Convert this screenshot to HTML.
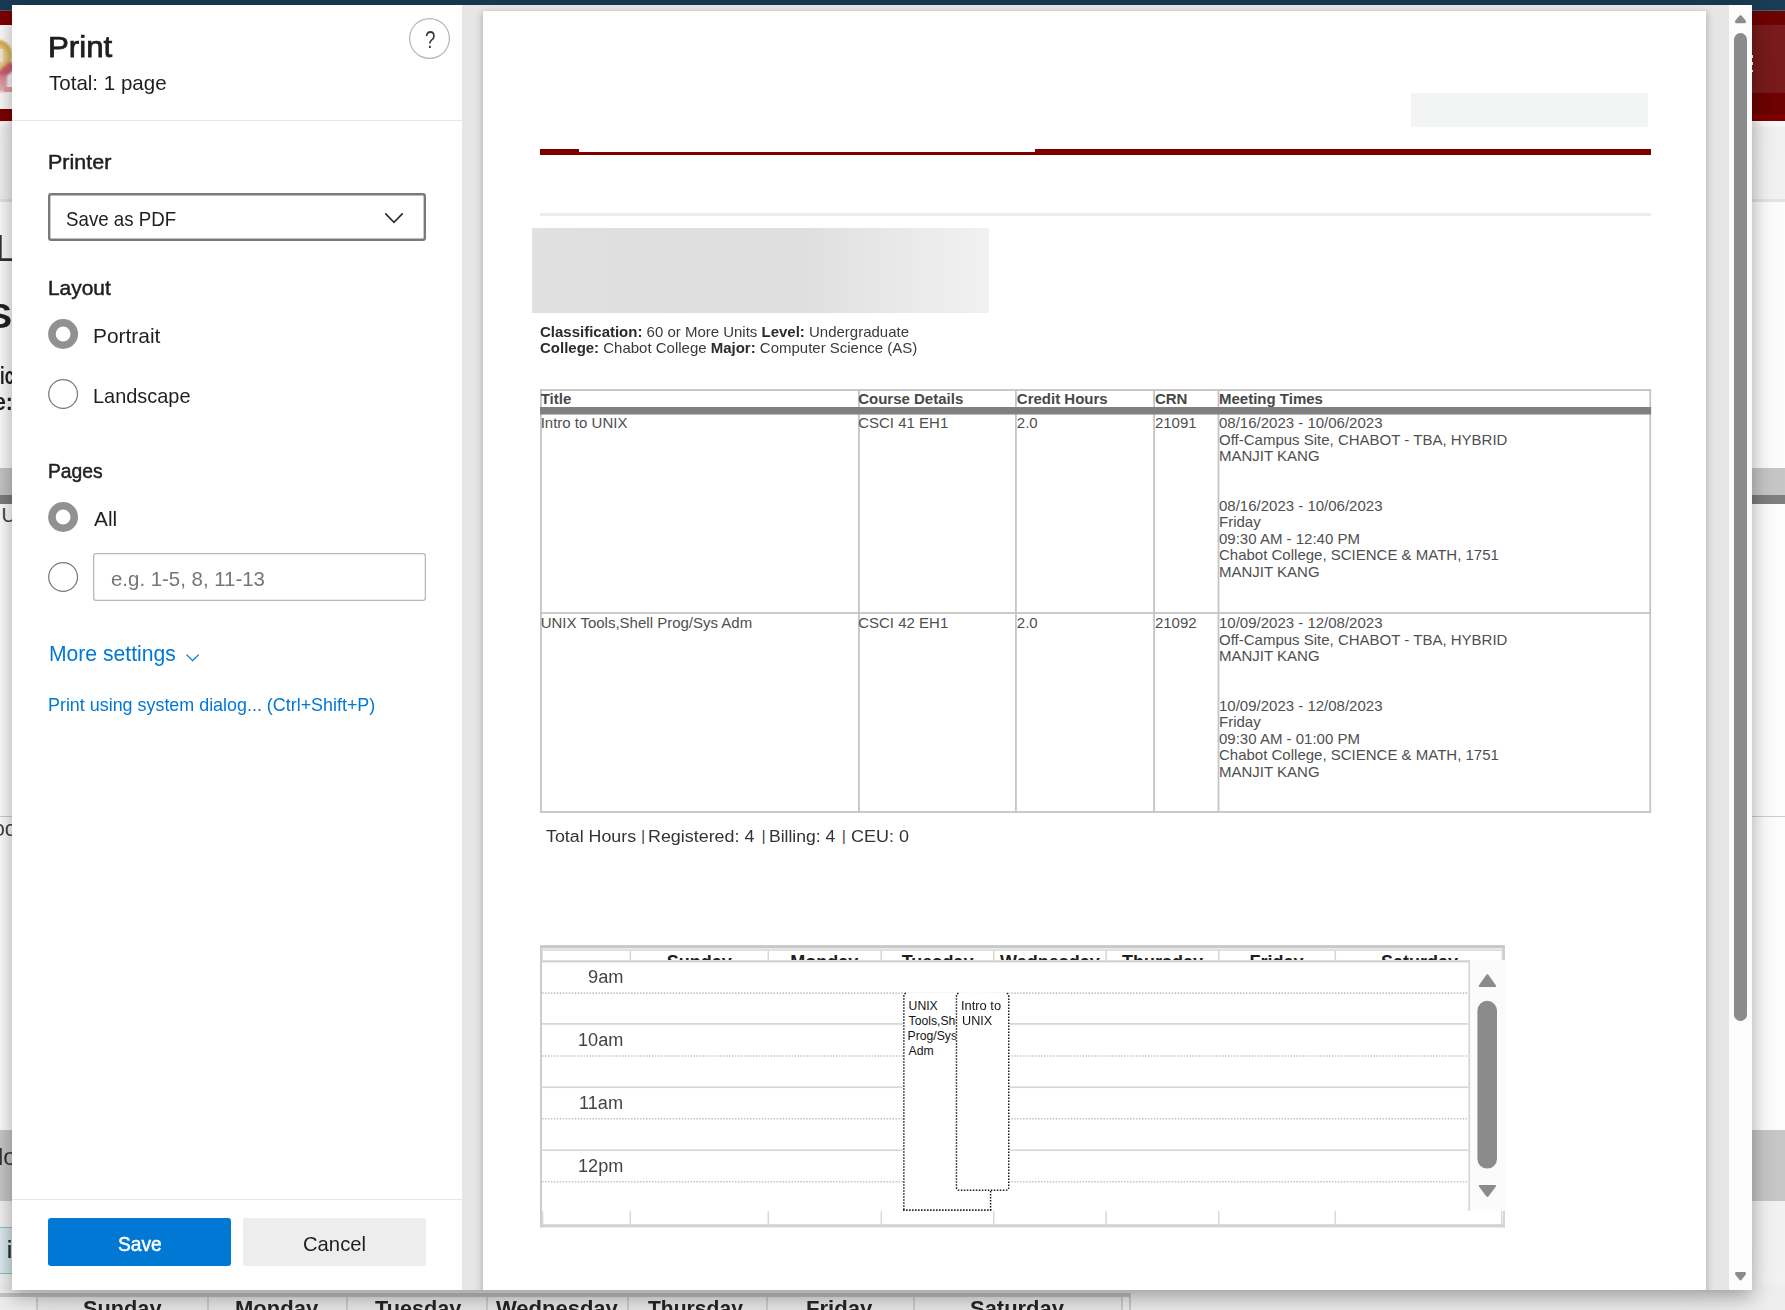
<!DOCTYPE html>
<html lang="en"><head><meta charset="utf-8"><title>Print</title>
<style>
html,body{margin:0;padding:0}
body{width:1785px;height:1310px;position:relative;overflow:hidden;background:#fff;font-family:"Liberation Sans",sans-serif}
.a{position:absolute}
.t{position:absolute;white-space:nowrap;transform-origin:0 0;display:block;margin:0;padding:0;font-weight:normal;font-style:normal;text-decoration:none;border:0;background:none;font-family:inherit}
svg{position:absolute;left:0;top:0;overflow:visible}
</style></head><body>

<div class="a" id="bg" style="left:0;top:0;width:1785px;height:1310px;overflow:hidden;background:#fff">
<div class="a" style="left:0;top:0;width:1785px;height:10px;background:#1a3c54"></div>
<div class="a" style="left:0;top:9.8px;width:1785px;height:1.5px;background:#3a647f"></div>
<div class="a" style="left:0;top:11.2px;width:1785px;height:109.6px;background:#7f0000"></div>
<div class="a" style="left:1752px;top:11.2px;width:33px;height:102.6px;background:#6e0303"></div>
<div class="a" style="left:1752px;top:24.8px;width:33px;height:68px;background:#7a1b1d"></div>
<div class="a" style="left:1751px;top:55px;width:2px;height:2.5px;background:#fff"></div>
<div class="a" style="left:1751px;top:62px;width:2px;height:2.5px;background:#fff"></div>
<div class="a" style="left:1751px;top:69.5px;width:2px;height:2.5px;background:#fff"></div>
<div class="a" style="left:0;top:24.8px;width:14px;height:84.2px;background:#fcfcfc;overflow:hidden"><div class="a" style="left:-16px;top:15px;width:28px;height:30px;border-radius:50%;background:radial-gradient(circle at 45% 55%,#f8efd9 0,#ecd39a 35%,#d9a838 70%,#d4a02c 100%);filter:blur(.8px)"></div><div class="a" style="left:-2px;top:24px;width:5px;height:13px;background:#f6ead0;filter:blur(.7px)"></div><div class="a" style="left:-6px;top:42px;width:22px;height:9px;background:#cf6070;transform:rotate(-38deg);filter:blur(.8px)"></div><div class="a" style="left:-4px;top:50px;width:11px;height:17px;background:linear-gradient(180deg,#d9808b,#ecbac0);filter:blur(.8px)"></div><div class="a" style="left:4px;top:62px;width:9px;height:5px;background:#e4a0a8;filter:blur(.6px)"></div></div>
<div class="a" style="left:0;top:120.8px;width:1785px;height:79px;background:linear-gradient(180deg,#fdfdfd 0,#f8f8f8 7%,#f3f3f3 8.5%,#f4f4f4 100%)"></div>
<div class="a" style="left:0;top:199px;width:1785px;height:3px;background:#e6e6e6"></div>
<div class="a" style="left:0;top:202px;width:1785px;height:266px;background:#fefefe"></div>
<div class="a" style="left:0;top:468px;width:1785px;height:27px;background:#c8c8c8"></div>
<div class="a" style="left:0;top:495px;width:1785px;height:9px;background:#808080"></div>
<div class="a" style="left:0;top:815.5px;width:1785px;height:1.5px;background:#cfcfcf"></div>
<div class="a" style="left:0;top:1129.5px;width:1785px;height:71px;background:#c9c9c9"></div>
<div class="a" style="left:0;top:1200.5px;width:1785px;height:110px;background:#f4f4f4"></div>
<div class="a" style="left:0;top:1226.5px;width:14px;height:45px;background:linear-gradient(90deg,#e0eff2,#d0e6eb);border-top:1.5px solid #93bcc7;border-bottom:1.5px solid #93bcc7"></div>
<span class="t" style="left:-5.09px;top:226px;font-size:37.0px;line-height:45px;color:#333;transform:scaleX(1.0294);">L</span>
<span class="t" style="left:-12.56px;top:294px;font-size:35.5px;line-height:44px;font-weight:bold;color:#222;transform:scaleX(1.0591);">S</span>
<span class="t" style="left:-0.41px;top:361px;font-size:23.5px;line-height:30px;font-weight:bold;color:#222;transform:scaleX(0.7124);">ic</span>
<span class="t" style="left:-6.00px;top:387px;font-size:23.5px;line-height:30px;font-weight:bold;color:#222;transform:scaleX(0.9072);">e:</span>
<span class="t" style="left:1.50px;top:502px;font-size:20.0px;line-height:26px;color:#444;">U</span>
<span class="t" style="left:-7.50px;top:814px;font-size:22.0px;line-height:29px;color:#444;transform:scaleX(0.9697);">oo</span>
<span class="t" style="left:-1.70px;top:1141px;font-size:24.0px;line-height:31px;color:#333;transform:scaleX(0.9982);">lo</span>
<span class="t" style="left:6.80px;top:1235px;font-size:23.0px;line-height:30px;font-weight:bold;color:#333;transform:scaleX(0.8000);">i</span>
<div class="a" style="left:0;top:1285px;width:1785px;height:25px;background:#f0f0f0"></div>
<div class="a" style="left:0;top:1293.1px;width:1131px;height:3.7px;background:#c6c6c6"></div>
<div class="a" style="left:1129px;top:1293.1px;width:2px;height:17px;background:#cbcbcb"></div>
<div class="a" style="left:36px;top:1296.8px;width:1086px;height:14px;background:#ebebeb"></div>
<div class="a" style="left:35.5px;top:1296.8px;width:2px;height:14px;background:#cfcfcf"></div>
<div class="a" style="left:207.4px;top:1296.8px;width:2px;height:14px;background:#cfcfcf"></div>
<div class="a" style="left:346.3px;top:1296.8px;width:2px;height:14px;background:#cfcfcf"></div>
<div class="a" style="left:486.4px;top:1296.8px;width:2px;height:14px;background:#cfcfcf"></div>
<div class="a" style="left:626.5px;top:1296.8px;width:2px;height:14px;background:#cfcfcf"></div>
<div class="a" style="left:766.2px;top:1296.8px;width:2px;height:14px;background:#cfcfcf"></div>
<div class="a" style="left:912.8px;top:1296.8px;width:2px;height:14px;background:#cfcfcf"></div>
<div class="a" style="left:1121.1px;top:1296.8px;width:2px;height:14px;background:#cfcfcf"></div>
<span class="t" style="left:82.50px;top:1294px;font-size:22.0px;line-height:29px;font-weight:bold;color:#262626;transform:scaleX(0.9885);">Sunday</span>
<span class="t" style="left:235.40px;top:1294px;font-size:22.0px;line-height:29px;font-weight:bold;color:#262626;transform:scaleX(1.0003);">Monday</span>
<span class="t" style="left:374.50px;top:1294px;font-size:22.0px;line-height:29px;font-weight:bold;color:#262626;transform:scaleX(0.9854);">Tuesday</span>
<span class="t" style="left:496.00px;top:1294px;font-size:22.0px;line-height:29px;font-weight:bold;color:#262626;transform:scaleX(0.9998);">Wednesday</span>
<span class="t" style="left:648.40px;top:1294px;font-size:22.0px;line-height:29px;font-weight:bold;color:#262626;transform:scaleX(0.9580);">Thursday</span>
<span class="t" style="left:805.90px;top:1294px;font-size:22.0px;line-height:29px;font-weight:bold;color:#262626;transform:scaleX(1.0048);">Friday</span>
<span class="t" style="left:970.00px;top:1294px;font-size:22.0px;line-height:29px;font-weight:bold;color:#262626;transform:scaleX(0.9978);">Saturday</span>
</div>
<div class="a" id="dlg" style="left:12px;top:5px;width:1740px;height:1285px;background:#fff;box-shadow:0 32px 72px rgba(0,0,0,.06),0 6px 18px rgba(0,0,0,.32)"></div>
<div class="a" style="left:12px;top:120px;width:450px;height:1.3px;background:#e6e6e6"></div>
<div class="a" style="left:12px;top:1199px;width:450px;height:1.3px;background:#e6e6e6"></div>
<div class="a" style="left:409px;top:18px;width:41px;height:41px;box-sizing:border-box;border-radius:50%;box-shadow:inset 0 0 0 1.2px #b4b4b4"></div>
<span class="t" style="left:424.90px;top:25px;font-size:23.5px;line-height:30px;color:#3a3a3a;transform:scaleX(0.8000);">?</span>
<h1 class="t" style="left:47.83px;top:29px;font-size:28.8px;line-height:36px;-webkit-text-stroke:0.75px #1f1f1f;color:#1f1f1f;transform:scaleX(1.0855);">Print</h1>
<span class="t" style="left:48.50px;top:69px;font-size:21.0px;line-height:27px;color:#1f1f1f;transform:scaleX(0.9776);">Total: 1 page</span>
<h2 class="t" style="left:48.38px;top:148px;font-size:21.0px;line-height:27px;-webkit-text-stroke:0.5px #1f1f1f;color:#1f1f1f;transform:scaleX(1.0237);">Printer</h2>
<div class="a" style="left:48px;top:193px;width:378px;height:48px;border-radius:3px;box-shadow:inset 0 0 0 2.4px #7a7a7a"></div>
<span class="t" style="left:66.00px;top:205px;font-size:21.0px;line-height:27px;color:#1f1f1f;transform:scaleX(0.8911);">Save as PDF</span>
<svg width="1785" height="1310"><path d="M385.3 213.4 L394 222.3 L402.7 213.4" fill="none" stroke="#2a2a2a" stroke-width="1.6"/><path d="M186.5 654.6 L192.6 660.7 L198.7 654.6" fill="none" stroke="#0078d4" stroke-width="1.3"/></svg>
<h2 class="t" style="left:48.41px;top:274px;font-size:21.0px;line-height:27px;-webkit-text-stroke:0.5px #1f1f1f;color:#1f1f1f;transform:scaleX(0.9949);">Layout</h2>
<svg width="1785" height="1310"><circle cx="63.1" cy="334" r="11.2" fill="#fff" stroke="#919191" stroke-width="7.6"/></svg>
<label class="t" style="left:93.10px;top:322px;font-size:21.0px;line-height:27px;color:#1f1f1f;transform:scaleX(0.9962);">Portrait</label>
<svg width="1785" height="1310"><circle cx="63.1" cy="394" r="14.4" fill="#fff" stroke="#7a7a7a" stroke-width="1.25"/></svg>
<label class="t" style="left:93.15px;top:382px;font-size:21.0px;line-height:27px;color:#1f1f1f;transform:scaleX(0.9488);">Landscape</label>
<h2 class="t" style="left:48.48px;top:457px;font-size:21.0px;line-height:27px;-webkit-text-stroke:0.5px #1f1f1f;color:#1f1f1f;transform:scaleX(0.9183);">Pages</h2>
<svg width="1785" height="1310"><circle cx="63.1" cy="517" r="11.2" fill="#fff" stroke="#919191" stroke-width="7.6"/></svg>
<label class="t" style="left:93.50px;top:505px;font-size:21.0px;line-height:27px;color:#1f1f1f;transform:scaleX(0.9924);">All</label>
<svg width="1785" height="1310"><circle cx="63.1" cy="577" r="14.4" fill="#fff" stroke="#7a7a7a" stroke-width="1.25"/></svg>
<div class="a" style="left:93px;top:553px;width:333px;height:48px;border-radius:3px;box-shadow:inset 0 0 0 1.3px #b8b8b8"></div>
<span class="t" style="left:110.80px;top:565px;font-size:21.0px;line-height:27px;color:#767676;transform:scaleX(0.9721);">e.g. 1-5, 8, 11-13</span>
<a class="t" href="#" style="left:48.52px;top:639px;font-size:21.6px;line-height:29px;color:#0078d4;transform:scaleX(0.9781);">More settings</a>
<a class="t" href="#" style="left:48.13px;top:692px;font-size:18.4px;line-height:25px;color:#0078d4;transform:scaleX(0.9732);">Print using system dialog... (Ctrl+Shift+P)</a>
<div class="a" style="left:48px;top:1218px;width:183.2px;height:48px;border-radius:3px;background:#0078d4"></div>
<span class="t" style="left:118.20px;top:1230px;font-size:21.0px;line-height:27px;-webkit-text-stroke:0.5px #fff;color:#fff;transform:scaleX(0.9134);">Save</span>
<div class="a" style="left:243.2px;top:1218px;width:182.8px;height:48px;border-radius:3px;background:#ededed"></div>
<span class="t" style="left:302.74px;top:1230px;font-size:21.0px;line-height:27px;color:#1f1f1f;transform:scaleX(0.9638);">Cancel</span>
<div class="a" style="left:462px;top:5px;width:1290px;height:1285px;background:#e6e6e6;overflow:hidden">
<div class="a" style="left:21px;top:6px;width:1223px;height:1290px;background:#fff;box-shadow:0 1.5px 7px 1px rgba(0,0,0,.24)"></div>
<div class="a" style="left:1267px;top:0;width:23px;height:1285px;background:#fcfcfc"></div>
<div class="a" style="left:1272px;top:28px;width:13px;height:988px;border-radius:6.5px;background:#8b8b8b"></div>
</div>
<svg width="1785" height="1310"><path d="M1735.2 22.6 Q1734.6 21.2 1735.6 20.2 L1739.6 15.6 Q1740.5 14.7 1741.4 15.6 L1745.4 20.2 Q1746.4 21.2 1745.8 22.6 Q1745.4 23.2 1744.6 23.2 L1736.4 23.2 Q1735.6 23.2 1735.2 22.6Z" fill="#8b8b8b"/><path d="M1735.2 1272.6 Q1734.6 1274 1735.6 1275 L1739.6 1279.9 Q1740.5 1280.9 1741.4 1279.9 L1745.4 1275 Q1746.4 1274 1745.8 1272.6 Q1745.4 1272 1744.6 1272 L1736.4 1272 Q1735.6 1272 1735.2 1272.6Z" fill="#8b8b8b"/></svg>
<div class="a" style="left:1411px;top:93px;width:237px;height:33.8px;background:#f3f4f4"></div>
<div class="a" style="left:540px;top:149px;width:39px;height:6px;background:#800000"></div>
<div class="a" style="left:540px;top:152px;width:1111px;height:3px;background:#800000"></div>
<div class="a" style="left:1035px;top:149px;width:616px;height:6px;background:#800000"></div>
<div class="a" style="left:540px;top:212.5px;width:1111px;height:3px;background:#ececec"></div>
<div class="a" style="left:531.8px;top:228px;width:457px;height:84.5px;background:linear-gradient(90deg,#e1e1e1 0,#dedede 30%,#dfdfdf 60%,#ebebeb 85%,#f1f1f1 100%)"></div>
<span class="t" style="left:540.00px;top:321px;font-size:15.0px;line-height:21px;color:#3a3a3a;white-space:pre;transform:scaleX(0.9990)"><b style="color:#2b2b2b">Classification:</b> 60 or More Units <b style="color:#2b2b2b">Level:</b> Undergraduate</span>
<span class="t" style="left:540.00px;top:337px;font-size:15.0px;line-height:21px;color:#3a3a3a;white-space:pre;transform:scaleX(0.9988)"><b style="color:#2b2b2b">College:</b> Chabot College <b style="color:#2b2b2b">Major:</b> Computer Science (AS)</span>
<svg width="1785" height="1310"><rect x="540.05" y="389.10" width="1.8" height="423.80" fill="#c5c5c5"/><rect x="858.00" y="389.10" width="1.8" height="423.80" fill="#c5c5c5"/><rect x="1015.00" y="389.10" width="1.8" height="423.80" fill="#c5c5c5"/><rect x="1153.20" y="389.10" width="1.8" height="423.80" fill="#c5c5c5"/><rect x="1217.60" y="389.10" width="1.8" height="423.80" fill="#c5c5c5"/><rect x="1649.30" y="389.10" width="1.8" height="423.80" fill="#c5c5c5"/><rect x="540.05" y="389.10" width="1111.05" height="1.9" fill="#c5c5c5"/><rect x="540.05" y="612.10" width="1111.05" height="1.8" fill="#c5c5c5"/><rect x="540.05" y="811.10" width="1111.05" height="1.8" fill="#c5c5c5"/><rect x="540.05" y="407" width="1111.05" height="7.5" fill="#808080"/></svg>
<span class="t" style="left:540.70px;top:388px;font-size:15.0px;line-height:21px;font-weight:bold;color:#484848;">Title</span>
<span class="t" style="left:858.20px;top:388px;font-size:15.0px;line-height:21px;font-weight:bold;color:#484848;">Course Details</span>
<span class="t" style="left:1016.80px;top:388px;font-size:15.0px;line-height:21px;font-weight:bold;color:#484848;">Credit Hours</span>
<span class="t" style="left:1154.90px;top:388px;font-size:15.0px;line-height:21px;font-weight:bold;color:#484848;">CRN</span>
<span class="t" style="left:1219.00px;top:388px;font-size:15.0px;line-height:21px;font-weight:bold;color:#484848;">Meeting Times</span>
<span class="t" style="left:540.70px;top:412px;font-size:15.0px;line-height:21px;color:#4f4f4f;">Intro to UNIX</span>
<span class="t" style="left:858.20px;top:412px;font-size:15.0px;line-height:21px;color:#4f4f4f;">CSCI 41 EH1</span>
<span class="t" style="left:1016.80px;top:412px;font-size:15.0px;line-height:21px;color:#4f4f4f;">2.0</span>
<span class="t" style="left:1154.90px;top:412px;font-size:15.0px;line-height:21px;color:#4f4f4f;">21091</span>
<span class="t" style="left:1219.00px;top:412px;font-size:15.0px;line-height:21px;color:#4f4f4f;">08/16/2023 - 10/06/2023</span>
<span class="t" style="left:1219.00px;top:429px;font-size:15.0px;line-height:21px;color:#4f4f4f;">Off-Campus Site, CHABOT - TBA, HYBRID</span>
<span class="t" style="left:1219.00px;top:445px;font-size:15.0px;line-height:21px;color:#4f4f4f;">MANJIT KANG</span>
<span class="t" style="left:1219.00px;top:495px;font-size:15.0px;line-height:21px;color:#4f4f4f;">08/16/2023 - 10/06/2023</span>
<span class="t" style="left:1219.00px;top:511px;font-size:15.0px;line-height:21px;color:#4f4f4f;">Friday</span>
<span class="t" style="left:1219.00px;top:528px;font-size:15.0px;line-height:21px;color:#4f4f4f;">09:30 AM - 12:40 PM</span>
<span class="t" style="left:1219.00px;top:544px;font-size:15.0px;line-height:21px;color:#4f4f4f;">Chabot College, SCIENCE &amp; MATH, 1751</span>
<span class="t" style="left:1219.00px;top:561px;font-size:15.0px;line-height:21px;color:#4f4f4f;">MANJIT KANG</span>
<span class="t" style="left:540.70px;top:612px;font-size:15.0px;line-height:21px;color:#4f4f4f;">UNIX Tools,Shell Prog/Sys Adm</span>
<span class="t" style="left:858.20px;top:612px;font-size:15.0px;line-height:21px;color:#4f4f4f;">CSCI 42 EH1</span>
<span class="t" style="left:1016.80px;top:612px;font-size:15.0px;line-height:21px;color:#4f4f4f;">2.0</span>
<span class="t" style="left:1154.90px;top:612px;font-size:15.0px;line-height:21px;color:#4f4f4f;">21092</span>
<span class="t" style="left:1219.00px;top:612px;font-size:15.0px;line-height:21px;color:#4f4f4f;">10/09/2023 - 12/08/2023</span>
<span class="t" style="left:1219.00px;top:629px;font-size:15.0px;line-height:21px;color:#4f4f4f;">Off-Campus Site, CHABOT - TBA, HYBRID</span>
<span class="t" style="left:1219.00px;top:645px;font-size:15.0px;line-height:21px;color:#4f4f4f;">MANJIT KANG</span>
<span class="t" style="left:1219.00px;top:695px;font-size:15.0px;line-height:21px;color:#4f4f4f;">10/09/2023 - 12/08/2023</span>
<span class="t" style="left:1219.00px;top:711px;font-size:15.0px;line-height:21px;color:#4f4f4f;">Friday</span>
<span class="t" style="left:1219.00px;top:728px;font-size:15.0px;line-height:21px;color:#4f4f4f;">09:30 AM - 01:00 PM</span>
<span class="t" style="left:1219.00px;top:744px;font-size:15.0px;line-height:21px;color:#4f4f4f;">Chabot College, SCIENCE &amp; MATH, 1751</span>
<span class="t" style="left:1219.00px;top:761px;font-size:15.0px;line-height:21px;color:#4f4f4f;">MANJIT KANG</span>
<span class="t" style="left:546.40px;top:824px;font-size:17.25px;line-height:24px;color:#333;transform:scaleX(1.0321);">Total Hours</span>
<span class="t" style="left:641.20px;top:826px;font-size:14.2px;line-height:20px;color:#333;">|</span>
<span class="t" style="left:648.46px;top:824px;font-size:17.25px;line-height:24px;color:#333;transform:scaleX(1.0372);">Registered: 4</span>
<span class="t" style="left:761.70px;top:826px;font-size:14.2px;line-height:20px;color:#333;">|</span>
<span class="t" style="left:769.38px;top:824px;font-size:17.25px;line-height:24px;color:#333;transform:scaleX(1.0154);">Billing: 4</span>
<span class="t" style="left:841.90px;top:826px;font-size:14.2px;line-height:20px;color:#333;">|</span>
<span class="t" style="left:851.00px;top:824px;font-size:17.25px;line-height:24px;color:#333;transform:scaleX(1.0417);">CEU: 0</span>
<svg width="1785" height="1310"><rect x="540.10" y="945.10" width="964.80" height="2.90" fill="#c8c8c8"/><rect x="541.00" y="948.00" width="963.90" height="1.40" fill="#e9e9e9"/><rect x="541.00" y="949.40" width="963.90" height="1.40" fill="#d6d6d6"/><rect x="540.10" y="945.10" width="1.80" height="282.30" fill="#c8c8c8"/><rect x="541.90" y="950.80" width="1.00" height="9.50" fill="#dedede"/><rect x="1501.30" y="949.40" width="1.30" height="11.00" fill="#e0e0e0"/><rect x="1502.60" y="948.00" width="2.30" height="12.40" fill="#cccccc"/><rect x="540.10" y="1224.20" width="964.80" height="3.20" fill="#d2d2d2"/><rect x="1503.10" y="1211.00" width="1.80" height="16.40" fill="#d2d2d2"/><rect x="629.55" y="950.80" width="1.50" height="9.50" fill="#d6d6d6"/><rect x="767.55" y="950.80" width="1.50" height="9.50" fill="#d6d6d6"/><rect x="880.55" y="950.80" width="1.50" height="9.50" fill="#d6d6d6"/><rect x="993.05" y="950.80" width="1.50" height="9.50" fill="#d6d6d6"/><rect x="1105.35" y="950.80" width="1.50" height="9.50" fill="#d6d6d6"/><rect x="1217.95" y="950.80" width="1.50" height="9.50" fill="#d6d6d6"/><rect x="1334.55" y="950.80" width="1.50" height="9.50" fill="#d6d6d6"/><rect x="541.85" y="1211.20" width="1.50" height="13.00" fill="#d8d8d8"/><rect x="629.55" y="1211.20" width="1.50" height="13.00" fill="#d8d8d8"/><rect x="767.55" y="1211.20" width="1.50" height="13.00" fill="#d8d8d8"/><rect x="880.55" y="1211.20" width="1.50" height="13.00" fill="#d8d8d8"/><rect x="993.05" y="1211.20" width="1.50" height="13.00" fill="#d8d8d8"/><rect x="1105.35" y="1211.20" width="1.50" height="13.00" fill="#d8d8d8"/><rect x="1217.95" y="1211.20" width="1.50" height="13.00" fill="#d8d8d8"/><rect x="1334.55" y="1211.20" width="1.50" height="13.00" fill="#d8d8d8"/><rect x="1500.95" y="1211.20" width="1.50" height="13.00" fill="#d8d8d8"/></svg>
<div class="a" style="left:543px;top:951px;width:958px;height:9.4px;overflow:hidden">
<span class="t" style="left:123.80px;top:-1px;font-size:18.0px;line-height:24px;font-weight:bold;color:#1e1e1e;">Sunday</span>
<span class="t" style="left:247.30px;top:-1px;font-size:18.0px;line-height:24px;font-weight:bold;color:#1e1e1e;">Monday</span>
<span class="t" style="left:358.71px;top:-1px;font-size:18.0px;line-height:24px;font-weight:bold;color:#1e1e1e;">Tuesday</span>
<span class="t" style="left:457.10px;top:-1px;font-size:18.0px;line-height:24px;font-weight:bold;color:#1e1e1e;">Wednesday</span>
<span class="t" style="left:578.90px;top:-1px;font-size:18.0px;line-height:24px;font-weight:bold;color:#1e1e1e;">Thursday</span>
<span class="t" style="left:706.50px;top:-1px;font-size:18.0px;line-height:24px;font-weight:bold;color:#1e1e1e;">Friday</span>
<span class="t" style="left:838.00px;top:-1px;font-size:18.0px;line-height:24px;font-weight:bold;color:#1e1e1e;">Saturday</span>
</div>
<svg width="1785" height="1310"><rect x="1469.90" y="960.00" width="35.00" height="251.00" fill="#fbfbfb"/><rect x="540.10" y="960.30" width="929.80" height="2.10" fill="#d0d0d0"/><rect x="1468.50" y="960.30" width="1.40" height="250.70" fill="#cfcfcf"/><line x1="542" y1="993.1" x2="1468.5" y2="993.1" stroke="#c4c4c4" stroke-width="1.6" stroke-dasharray="1.5 1.47"/><line x1="542" y1="1056.0" x2="1468.5" y2="1056.0" stroke="#c4c4c4" stroke-width="1.6" stroke-dasharray="1.5 1.47"/><line x1="542" y1="1118.8" x2="1468.5" y2="1118.8" stroke="#c4c4c4" stroke-width="1.6" stroke-dasharray="1.5 1.47"/><line x1="542" y1="1181.8" x2="1468.5" y2="1181.8" stroke="#c4c4c4" stroke-width="1.6" stroke-dasharray="1.5 1.47"/><rect x="541.90" y="1023.05" width="926.60" height="1.70" fill="#d7d7d7"/><rect x="541.90" y="1086.35" width="926.60" height="1.70" fill="#d7d7d7"/><rect x="541.90" y="1149.35" width="926.60" height="1.70" fill="#d7d7d7"/><rect x="903.1" y="992.4" width="88.2" height="218.6" fill="#fff"/><path d="M905.9 993.2 Q903.85 993.6 903.85 996.4 L903.85 1210.2" fill="none" stroke="#1a1a1a" stroke-width="1.5" stroke-dasharray="1.5 1.5"/><path d="M990.6 1191 L990.6 1210.2" fill="none" stroke="#1a1a1a" stroke-width="1.5" stroke-dasharray="1.5 1.5"/><line x1="903.1" y1="1210.2" x2="991.3" y2="1210.2" stroke="#1a1a1a" stroke-width="1.7" stroke-dasharray="1.5 1.5"/><rect x="1477.4" y="1000.8" width="19.6" height="167.7" rx="9.8" fill="#8b8b8b"/><path d="M1479.6 986.9 Q1478.2 986.9 1479 985.3 L1486.2 975.0 Q1487.4 973.6 1488.6 975.0 L1495.8 985.3 Q1496.6 986.9 1495.2 986.9Z" fill="#8b8b8b"/><path d="M1479.6 1185 Q1478.2 1185 1479 1186.6 L1486.2 1196.3 Q1487.4 1197.7 1488.6 1196.3 L1495.8 1186.6 Q1496.6 1185 1495.2 1185Z" fill="#8b8b8b"/></svg>
<span class="t" style="left:908.60px;top:997px;font-size:12.2px;line-height:18px;color:#151515;">UNIX</span>
<span class="t" style="left:908.60px;top:1012px;font-size:12.2px;line-height:18px;color:#151515;">Tools,Shell</span>
<span class="t" style="left:907.60px;top:1027px;font-size:12.2px;line-height:18px;color:#151515;">Prog/Sys</span>
<span class="t" style="left:908.60px;top:1042px;font-size:12.2px;line-height:18px;color:#151515;">Adm</span>
<svg width="1785" height="1310"><path d="M955.7 992.4 L1009.5 992.4 L1009.5 1187.3 Q1009.5 1191 1005.7 1191 L959.5 1191 Q955.7 1191 955.7 1187.3 Z" fill="#fff"/><path d="M958.5 993.2 Q956.45 993.6 956.45 996.4 L956.45 1187.2 Q956.45 1190.2 959.45 1190.2 L1005.75 1190.2 Q1008.75 1190.2 1008.75 1187.2 L1008.75 996.4 Q1008.75 993.6 1006.7 993.2" fill="none" stroke="#1a1a1a" stroke-width="1.5" stroke-dasharray="1.5 1.5"/></svg>
<span class="t" style="left:960.64px;top:997px;font-size:12.2px;line-height:18px;color:#151515;transform:scaleX(1.0576);">Intro to</span>
<span class="t" style="left:961.70px;top:1012px;font-size:12.2px;line-height:18px;color:#151515;transform:scaleX(1.0383);">UNIX</span>
<span class="t" style="left:587.50px;top:965px;font-size:18.0px;line-height:24px;color:#444;transform:scaleX(1.0141);">9am</span>
<span class="t" style="left:577.69px;top:1028px;font-size:18.0px;line-height:24px;color:#444;transform:scaleX(1.0062);">10am</span>
<span class="t" style="left:578.99px;top:1091px;font-size:18.0px;line-height:24px;color:#444;transform:scaleX(1.0073);">11am</span>
<span class="t" style="left:577.69px;top:1154px;font-size:18.0px;line-height:24px;color:#444;transform:scaleX(1.0062);">12pm</span>
</body></html>
